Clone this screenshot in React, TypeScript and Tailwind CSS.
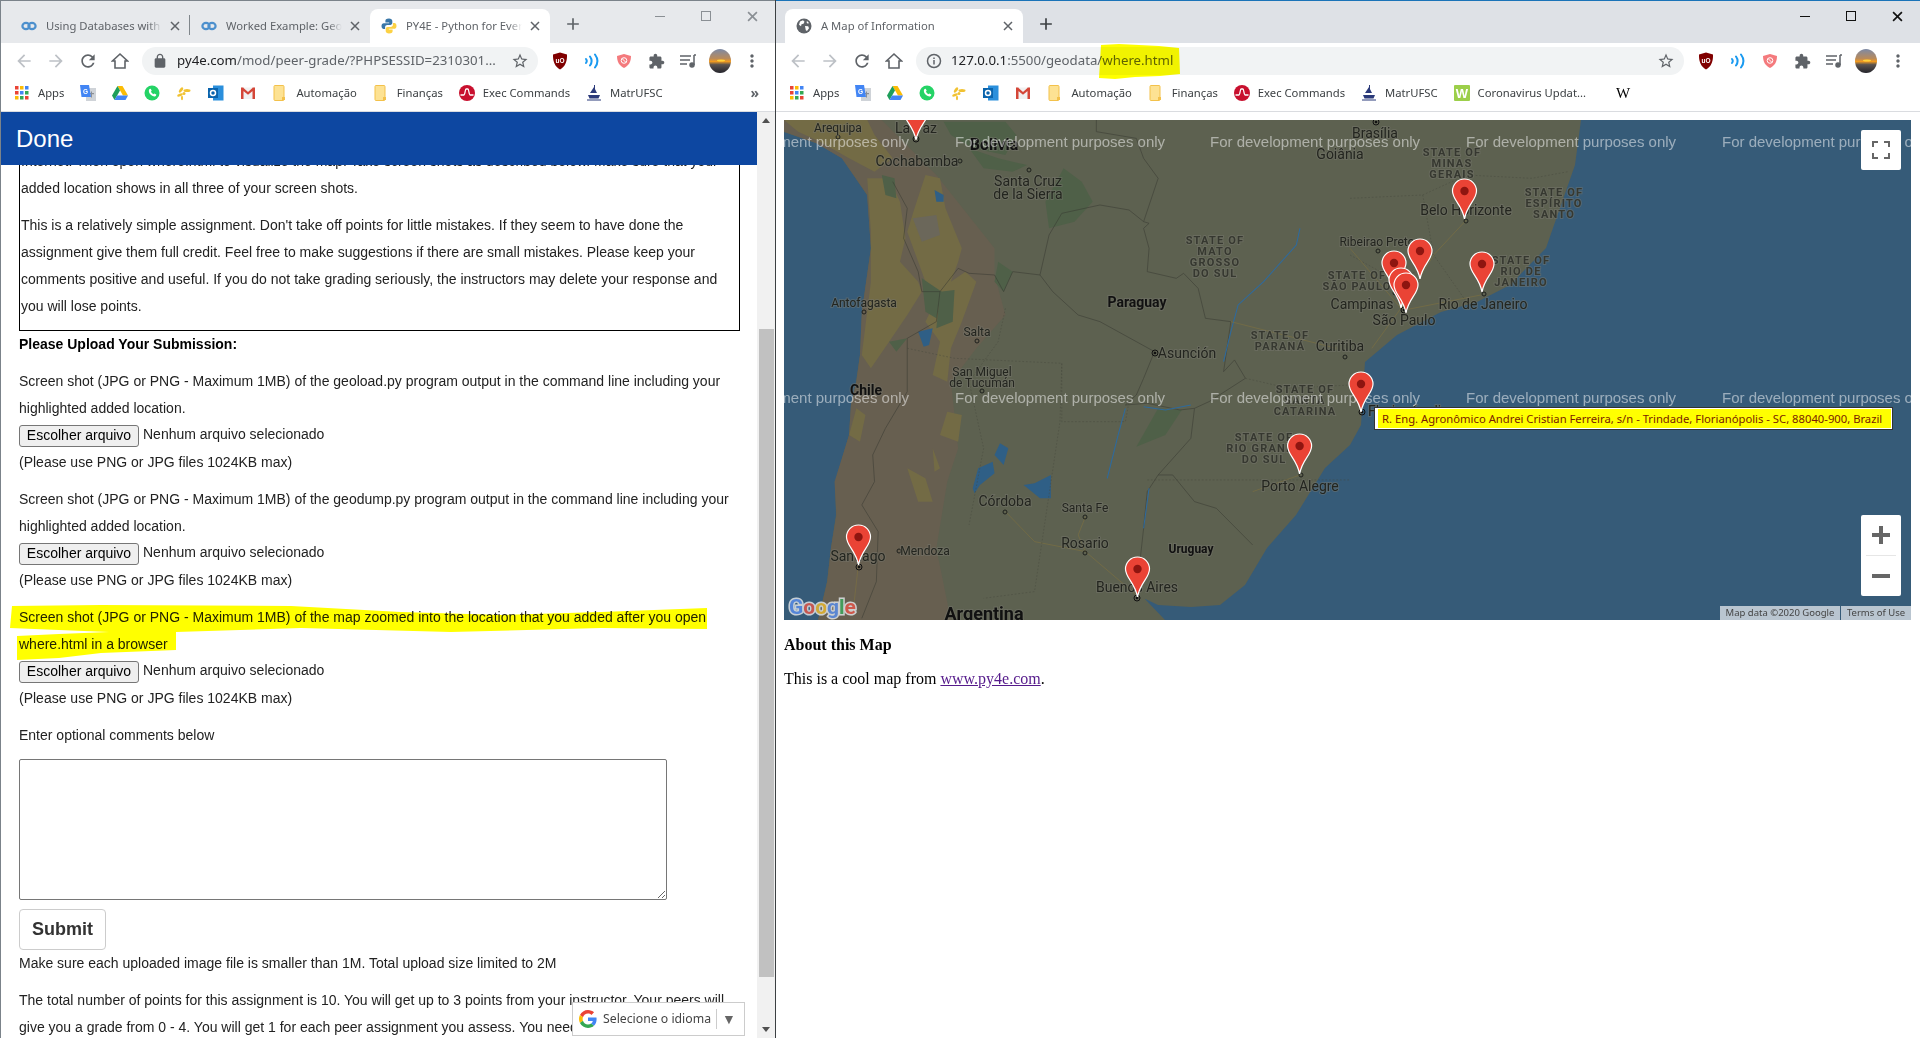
import React from "react";

const uiFont = "font-['Noto_Sans','Open_Sans',sans-serif]";
const arial = "font-['Liberation_Sans',Arial,sans-serif]";

const Mat = ({ d, size = 18, color = "#5f6368" }: { d: string; size?: number; color?: string }) => (
  <svg width={size} height={size} viewBox="0 0 24 24" fill={color}>
    <path d={d} />
  </svg>
);

const ICONS = {
  back: "M20 11H7.83l5.59-5.59L12 4l-8 8 8 8 1.41-1.41L7.83 13H20v-2z",
  forward: "M12 4l-1.41 1.41L16.17 11H4v2h12.17l-5.58 5.59L12 20l8-8z",
  reload:
    "M17.65 6.35C16.2 4.9 14.21 4 12 4c-4.42 0-7.99 3.58-7.99 8s3.57 8 7.99 8c3.73 0 6.84-2.55 7.73-6h-2.08c-.82 2.33-3.04 4-5.65 4-3.31 0-6-2.69-6-6s2.69-6 6-6c1.66 0 3.14.69 4.22 1.78L13 11h7V4l-2.35 2.35z",
  star: "M22 9.24l-7.19-.62L12 2 9.19 8.63 2 9.24l5.46 4.73L5.82 21 12 17.27 18.18 21l-1.63-7.03L22 9.24zM12 15.4l-3.76 2.27 1-4.28-3.32-2.88 4.38-.38L12 6.1l1.71 4.04 4.38.38-3.32 2.88 1 4.28L12 15.4z",
  puzzle:
    "M20.5 11H19V7c0-1.1-.9-2-2-2h-4V3.5C13 2.12 11.88 1 10.5 1S8 2.12 8 3.5V5H4c-1.1 0-1.99.9-1.99 2v3.8H3.5c1.49 0 2.7 1.21 2.7 2.7s-1.21 2.7-2.7 2.7H2V20c0 1.1.9 2 2 2h3.8v-1.5c0-1.49 1.21-2.7 2.7-2.7 1.49 0 2.7 1.21 2.7 2.7V22H17c1.1 0 2-.9 2-2v-4h1.5c1.38 0 2.5-1.12 2.5-2.5S21.88 11 20.5 11z",
  dots: "M12 8c1.1 0 2-.9 2-2s-.9-2-2-2-2 .9-2 2 .9 2 2 2zm0 2c-1.1 0-2 .9-2 2s.9 2 2 2 2-.9 2-2-.9-2-2-2zm0 6c-1.1 0-2 .9-2 2s.9 2 2 2 2-.9 2-2-.9-2-2-2z",
  lock: "M18 8h-1V6c0-2.76-2.24-5-5-5S7 3.24 7 6v2H6c-1.1 0-2 .9-2 2v10c0 1.1.9 2 2 2h12c1.1 0 2-.9 2-2V10c0-1.1-.9-2-2-2zM9 6c0-1.66 1.34-3 3-3s3 1.34 3 3v2H9V6z",
};

const HomeIcon = () => (
  <svg width="18" height="18" viewBox="0 0 18 18" fill="none" stroke="#5f6368" strokeWidth="1.6">
    <path d="M9 2 1.5 9H4v7h10V9h2.5L9 2z" strokeLinejoin="miter" />
  </svg>
);

const CloseX = ({ color = "#5f6368", size = 10 }: { color?: string; size?: number }) => (
  <svg width={size} height={size} viewBox="0 0 10 10" stroke={color} strokeWidth="1.5">
    <path d="M1 1l8 8M9 1l-8 8" />
  </svg>
);

const CourseraIcon = () => (
  <svg width="16" height="16" viewBox="0 0 16 16" fill="none" stroke="#4d90cd" strokeWidth="2.2">
    <ellipse cx="5" cy="8" rx="3.6" ry="3.2" />
    <ellipse cx="11" cy="8" rx="3.6" ry="3.2" />
  </svg>
);

const PythonIcon = () => (
  <svg width="16" height="16" viewBox="0 0 16 16">
    <path
      fill="#3a77a8"
      d="M8 .5C5 .5 4.4 1.7 4.4 3v1.6h3.8v.6H2.9C1.4 5.2.5 6.4.5 8.1c0 1.6.8 2.9 2.2 2.9h1.4V9.2c0-1.3 1-2.2 2.2-2.2h3.1c1 0 1.9-.8 1.9-1.9V3C11.3 1.4 10 .5 8 .5z"
    />
    <path
      fill="#fcd144"
      d="M8 15.5c3 0 3.6-1.2 3.6-2.5v-1.6H7.8v-.6h5.3c1.5 0 2.4-1.2 2.4-2.9 0-1.6-.8-2.9-2.2-2.9h-1.4v1.8c0 1.3-1 2.2-2.2 2.2H6.6c-1 0-1.9.8-1.9 1.9V13c0 1.6 1.3 2.5 3.3 2.5z"
    />
  </svg>
);

const GlobeIcon = () => (
  <svg width="16" height="16" viewBox="0 0 16 16">
    <circle cx="8" cy="8" r="7.5" fill="#5f6368" />
    <path fill="#fff" d="M4 3.5l3-1.2 1.5 1.5-1 2-2 .4-.5 2-2-1.5zM9 8l3.2.3.8 2-2 2.7-1.2-.7zM11 3l2 2-1.2.8-1.3-1.5z" />
  </svg>
);

const UblockIcon = () => (
  <svg width="16" height="18" viewBox="0 0 16 18">
    <path fill="#800000" d="M8 .5 15 2.5c.2 6.5-1.5 12-7 15C2.5 14.5.8 9 1 2.5z" />
    <text x="8" y="10.5" fontSize="6.5" fontWeight="700" fill="#fff" textAnchor="middle" fontFamily="Liberation Sans">
      uO
    </text>
  </svg>
);

const SignalIcon = () => (
  <svg width="16" height="16" viewBox="0 0 16 16" fill="none" stroke="#1a9af0" strokeWidth="2" strokeLinecap="round">
    <path d="M2 6c1 1.3 1 2.7 0 4M6 3.5c2 2.8 2 6.2 0 9M11 1.5c3 4 3 9 0 13" />
  </svg>
);

const PinkShield = () => (
  <svg width="16" height="16" viewBox="0 0 16 16">
    <path fill="#f47a7d" d="M8 1 15 3c0 5.5-2 9.5-7 12C3 12.5 1 8.5 1 3z" />
    <circle cx="8" cy="7.5" r="2.8" fill="none" stroke="#fff" strokeWidth="1" />
    <path d="M6 5.5l4 4" stroke="#fff" strokeWidth="1" />
  </svg>
);

const QueueIcon = () => (
  <svg width="18" height="16" viewBox="0 0 18 16" fill="none" stroke="#5f6368" strokeWidth="1.5">
    <path d="M1 3h11M1 7h10M1 11h7M15 2v10" />
    <circle cx="13" cy="12" r="2" fill="#5f6368" />
    <path d="M15 2h2" />
  </svg>
);

const Avatar = ({ id }: { id: string }) => (
  <svg width="22" height="24" viewBox="0 0 22 24">
    <defs>
      <linearGradient id={id} x1="0" y1="0" x2="0" y2="1">
        <stop offset="0" stopColor="#7d8aa6" />
        <stop offset="0.4" stopColor="#b98a5a" />
        <stop offset="0.52" stopColor="#f29a1f" />
        <stop offset="0.65" stopColor="#5c5450" />
        <stop offset="1" stopColor="#24242c" />
      </linearGradient>
    </defs>
    <ellipse cx="11" cy="12" rx="11" ry="12" fill={`url(#${id})`} />
    <ellipse cx="12" cy="11.5" rx="4" ry="1" fill="#ffd23c" />
  </svg>
);

const AppsIcon = () => {
  const colors = ["#ea4335", "#fbbc05", "#4285f4", "#ea4335", "#4285f4", "#34a853", "#fbbc05", "#34a853", "#ea4335"];
  return (
    <svg width="16" height="16" viewBox="0 0 16 16">
      {colors.map((c, i) => (
        <rect key={i} x={1 + (i % 3) * 5} y={1 + Math.floor(i / 3) * 5} width="3.5" height="3.5" fill={c} />
      ))}
    </svg>
  );
};

const TranslateIcon = () => (
  <svg width="16" height="16" viewBox="0 0 16 16">
    <rect x="6" y="3" width="10" height="13" fill="#cfd3d8" />
    <path fill="#8a8f96" d="M9 8h5v1.2h-5zM11 6.5h1v6h-1z" />
    <path fill="#4285f4" d="M0 0h9l2 12H1.5z" />
    <text x="5.5" y="8.5" fontSize="6.5" fontWeight="700" fill="#fff" textAnchor="middle" fontFamily="Liberation Sans">
      G
    </text>
  </svg>
);

const DriveIcon = () => (
  <svg width="16" height="16" viewBox="0 0 16 16">
    <path fill="#fbbc05" d="M5.5 1h5l5.5 9.5h-5z" />
    <path fill="#1e9e5a" d="M5.5 1 0 10.5 2.5 15 8 5.5z" />
    <path fill="#4285f4" d="M5 10.5h11L13.5 15h-11z" />
  </svg>
);

const WhatsappIcon = () => (
  <svg width="16" height="16" viewBox="0 0 16 16">
    <circle cx="8" cy="8" r="7.5" fill="#25d366" />
    <path
      fill="#fff"
      d="M5.5 4l1.2-.2 1 2-.8 1c.5 1 1.3 1.8 2.4 2.4l1-.8 2 1-.3 1.3c-.3.6-1 .9-1.7.8-3-.5-5.3-2.7-5.5-5.5 0-.8.3-1.5.7-2z"
    />
  </svg>
);

const BurstIcon = () => (
  <svg width="16" height="16" viewBox="0 0 16 16" fill="#f1c232">
    <ellipse cx="5" cy="5" rx="1.5" ry="3" transform="rotate(35 5 5)" />
    <ellipse cx="11" cy="5.5" rx="3.5" ry="1.5" />
    <ellipse cx="8" cy="8.5" rx="1.5" ry="1.5" />
    <ellipse cx="4" cy="10" rx="3" ry="1.3" transform="rotate(-20 4 10)" />
    <ellipse cx="6" cy="13" rx="1" ry="2.2" />
  </svg>
);

const OutlookIcon = () => (
  <svg width="16" height="16" viewBox="0 0 16 16">
    <rect x="5" y="0.5" width="10.5" height="15" fill="#2a8fdc" />
    <rect x="0" y="3" width="10" height="10" fill="#0a64ad" />
    <circle cx="5" cy="8" r="2.5" fill="none" stroke="#fff" strokeWidth="1.5" />
  </svg>
);

const GmailIcon = () => (
  <svg width="16" height="16" viewBox="0 0 16 16">
    <rect x="1" y="2.5" width="14" height="11.5" fill="#f1f1f1" />
    <path fill="#d44638" d="M1 2.5h2.5V14H1zM12.5 2.5H15V14h-2.5zM1 2.5h2L8 7l5-4.5h2V4L8 9.8 1 4z" />
  </svg>
);

const FolderIcon = () => (
  <svg width="16" height="16" viewBox="0 0 16 16">
    <rect x="2" y="0.5" width="10" height="15" rx="1" fill="#fde293" stroke="#f3c14b" />
    <rect x="10" y="12" width="3" height="3" fill="#f3c14b" />
  </svg>
);

const ExecIcon = () => (
  <svg width="16" height="16" viewBox="0 0 16 16">
    <circle cx="8" cy="8" r="8" fill="#c8102e" />
    <path d="M1.5 10H5c1 0 1.2-6 2-6h2c.8 0 1 6 2 6h3.5" fill="none" stroke="#fff" strokeWidth="1.3" />
  </svg>
);

const ShipIcon = () => (
  <svg width="16" height="16" viewBox="0 0 16 16" fill="#2b3a7a">
    <path d="M2 10h12l-1.5 3.5h-9zM4 8l4-6 3 6zM1 14.500h14v1H1z" />
    <path d="M8 0h1v8H8z" />
  </svg>
);

const WorldometerIcon = () => (
  <svg width="16" height="16" viewBox="0 0 16 16">
    <rect width="16" height="16" rx="1" fill="#9ccf4a" />
    <text x="8" y="13" fontSize="13" fontWeight="700" fill="#fff" textAnchor="middle" fontFamily="Liberation Sans">
      W
    </text>
  </svg>
);

const GoogleG = ({ size = 18 }: { size?: number }) => (
  <svg width={size} height={size} viewBox="0 0 48 48">
    <path fill="#EA4335" d="M24 9.5c3.5 0 6.7 1.2 9.2 3.6l6.9-6.9C35.9 2.4 30.5 0 24 0 14.6 0 6.5 5.4 2.6 13.2l8 6.2C12.4 13.7 17.7 9.5 24 9.5z" />
    <path fill="#4285F4" d="M46.9 24.5c0-1.600-.1-3.100-.4-4.500H24v9h12.900c-.6 3-2.200 5.500-4.700 7.200l7.700 6c4.500-4.200 7-10.300 7-17.700z" />
    <path fill="#FBBC05" d="M10.5 28.6c-.5-1.400-.8-3-.8-4.600s.3-3.200.8-4.600l-8-6.200C.9 16.500 0 20.100 0 24s.9 7.500 2.600 10.800l7.900-6.200z" />
    <path fill="#34A853" d="M24 48c6.500 0 11.900-2.100 15.900-5.800l-7.700-6c-2.200 1.500-4.900 2.300-8.200 2.300-6.300 0-11.600-4.200-13.500-9.900l-8 6.200C6.500 42.600 14.600 48 24 48z" />
  </svg>
);

const Tab = ({
  icon,
  title,
  active = false,
  divider = false,
  wide = false,
}: {
  icon: React.ReactNode;
  title: string;
  active?: boolean;
  divider?: boolean;
  wide?: boolean;
}) => (
  <div
    className={`relative flex h-[34px] shrink-0 items-center pl-[11px] pr-[7px] ${wide ? "w-[238px]" : "w-[180px]"} ${active ? "rounded-t-[8px] bg-white" : ""}`}
  >
    {icon}
    <div className="ml-[9px] min-w-0 flex-1 overflow-hidden whitespace-nowrap text-[11.25px] text-[#5f6368] [mask-image:linear-gradient(to_right,black_88%,transparent)]">
      {title}
    </div>
    <div className="ml-[5px] flex w-4 shrink-0 justify-center">
      <CloseX />
    </div>
    {divider && <div className="absolute right-0 top-[6px] h-5 w-px bg-[#80868b]" />}
  </div>
);

const WindowControls = ({ color }: { color: string }) => (
  <div className="ml-auto flex self-start">
    <div className="flex h-[30px] w-[46px] items-center justify-center">
      <div className="h-px w-[10px]" style={{ background: color }} />
    </div>
    <div className="flex h-[30px] w-[46px] items-center justify-center">
      <div className="h-[10px] w-[10px] border" style={{ borderColor: color }} />
    </div>
    <div className="flex h-[30px] w-[46px] items-center justify-center">
      <CloseX color={color} size={11} />
    </div>
  </div>
);

const ToolButton = ({ children }: { children: React.ReactNode }) => (
  <div className="flex h-8 w-8 shrink-0 items-center justify-center">{children}</div>
);

const Toolbar = ({
  lead,
  address,
  avatarId,
  highlight = false,
  padding,
}: {
  lead: React.ReactNode;
  address: React.ReactNode;
  avatarId: string;
  highlight?: boolean;
  padding: string;
}) => (
  <div className={`flex h-9 shrink-0 items-center bg-white ${padding}`}>
    <ToolButton>
      <Mat d={ICONS.back} size={20} color="#bdc1c6" />
    </ToolButton>
    <ToolButton>
      <Mat d={ICONS.forward} size={20} color="#bdc1c6" />
    </ToolButton>
    <ToolButton>
      <Mat d={ICONS.reload} size={20} />
    </ToolButton>
    <ToolButton>
      <HomeIcon />
    </ToolButton>
    <div className="relative ml-[6px] flex h-7 min-w-0 flex-1 items-center rounded-full bg-[#f1f3f4] pl-[10px] pr-[9px]">
      <div className="flex w-4 shrink-0 justify-center">{lead}</div>
      <div className="ml-[9px] min-w-0 flex-1 whitespace-nowrap text-[13.25px] text-[#5f6368]">{address}</div>
      <Mat d={ICONS.star} size={18} />
      {highlight && (
        <svg className="absolute left-[183px] top-[-3px] mix-blend-multiply" width="82" height="36" viewBox="0 0 82 36">
          <path fill="#ffff00" d="M2 1 20 0l40 2 20 2 1 26-20 2-25 1-20 2-16-1z" />
        </svg>
      )}
    </div>
    <div className="ml-[6px] flex shrink-0">
      <ToolButton>
        <UblockIcon />
      </ToolButton>
      <ToolButton>
        <SignalIcon />
      </ToolButton>
      <ToolButton>
        <PinkShield />
      </ToolButton>
      <ToolButton>
        <Mat d={ICONS.puzzle} size={17} />
      </ToolButton>
      <ToolButton>
        <QueueIcon />
      </ToolButton>
      <ToolButton>
        <Avatar id={avatarId} />
      </ToolButton>
      <ToolButton>
        <Mat d={ICONS.dots} size={20} />
      </ToolButton>
    </div>
  </div>
);

const Bookmark = ({ icon, label }: { icon: React.ReactNode; label?: string }) => (
  <div className="flex shrink-0 items-center gap-[8px]">
    {icon}
    {label && <span className="text-[11.25px] text-[#3c4043]">{label}</span>}
  </div>
);

const CommonBookmarks = () => (
  <>
    <Bookmark icon={<AppsIcon />} label="Apps" />
    <Bookmark icon={<TranslateIcon />} />
    <Bookmark icon={<DriveIcon />} />
    <Bookmark icon={<WhatsappIcon />} />
    <Bookmark icon={<BurstIcon />} />
    <Bookmark icon={<OutlookIcon />} />
    <Bookmark icon={<GmailIcon />} />
    <Bookmark icon={<FolderIcon />} label="Automação" />
    <Bookmark icon={<FolderIcon />} label="Finanças" />
    <Bookmark icon={<ExecIcon />} label="Exec Commands" />
    <Bookmark icon={<ShipIcon />} label="MatrUFSC" />
  </>
);

/* ---- left page ---- */

const Line = ({ children, className = "" }: { children: React.ReactNode; className?: string }) => (
  <div className={`h-[27px] whitespace-nowrap leading-[27px] ${className}`}>{children}</div>
);

const UploadBlock = ({ first, second }: { first: string; second: string }) => (
  <div className="mb-[10px]">
    <Line>{first}</Line>
    <Line>{second}</Line>
    <div className="flex h-[27px] items-center">
      <button className="flex h-[22px] w-[120px] items-center justify-center rounded-[3px] border border-[#767676] bg-[#efefef] text-[14px] text-black">
        Escolher arquivo
      </button>
      <span className="ml-1 -translate-y-px">Nenhum arquivo selecionado</span>
    </div>
    <Line>(Please use PNG or JPG files 1024KB max)</Line>
  </div>
);

const LeftPage = () => (
  <div className={`relative flex-1 overflow-hidden bg-white ${arial}`}>
    <div className="absolute left-0 right-[18px] top-0 z-10 flex h-[53px] items-center bg-[#0d47a1] pl-[15px] text-[24px] text-white">
      Done
    </div>

    <div className="relative h-full w-[757px] pl-[18px] pr-[18px] pt-[36px] text-[14px] text-[#222]">
      <div className="mb-0 border-x border-b border-black pl-px">
        <Line>Internet. Then open where.html to visualize the map. Take screen shots as described below. Make sure that your</Line>
        <Line className="mb-[10px]">added location shows in all three of your screen shots.</Line>
        <Line>This is a relatively simple assignment. Don't take off points for little mistakes. If they seem to have done the</Line>
        <Line>assignment give them full credit. Feel free to make suggestions if there are small mistakes. Please keep your</Line>
        <Line>comments positive and useful. If you do not take grading seriously, the instructors may delete your response and</Line>
        <Line className="mb-[10px]">you will lose points.</Line>
      </div>
      <Line className="mb-[10px] font-bold text-black">Please Upload Your Submission:</Line>
      <UploadBlock
        first="Screen shot (JPG or PNG - Maximum 1MB) of the geoload.py program output in the command line including your"
        second="highlighted added location."
      />
      <UploadBlock
        first="Screen shot (JPG or PNG - Maximum 1MB) of the geodump.py program output in the command line including your"
        second="highlighted added location."
      />
      <UploadBlock
        first="Screen shot (JPG or PNG - Maximum 1MB) of the map zoomed into the location that you added after you open"
        second="where.html in a browser"
      />
      <Line className="mb-[10px]">Enter optional comments below</Line>
      <textarea
        readOnly
        className="mb-[9px] block h-[141px] w-[648px] rounded-[2px] border border-[#767676] bg-white"
      />
      <button className="flex h-[41px] w-[87px] items-center justify-center rounded-[4px] border border-[#cccccc] bg-white text-[18px] font-bold text-[#333]">
        Submit
      </button>
      <Line className="mb-[10px]">Make sure each uploaded image file is smaller than 1M. Total upload size limited to 2M</Line>
      <Line>The total number of points for this assignment is 10. You will get up to 3 points from your instructor. Your peers will</Line>
      <Line>give you a grade from 0 - 4. You will get 1 for each peer assignment you assess. You need to grade a minimum of</Line>

      {/* marker pen over the third upload block */}
      <svg className="pointer-events-none absolute left-0 top-[488px] mix-blend-multiply" width="720" height="62" viewBox="0 0 720 62">
        <path
          fill="#ffff00"
          d="M11 6 100 5l190 1 110 6 100 3 100-3 106-4v21l-106-1-150 4-150-4-125 4v18l-75 3-42 5-42 2V36l42-2 50-2-50-2-49-2z"
        />
      </svg>
    </div>

    {/* scrollbar */}
    <div className="absolute bottom-0 right-0 top-0 flex w-[18px] flex-col items-center bg-[#f1f1f1]">
      <div className="mt-[6px] h-0 w-0 border-x-[4px] border-b-[5px] border-x-transparent border-b-[#505050]" />
      <div className="mt-[206px] h-[648px] w-[15px] bg-[#c1c1c1]" />
      <div className="mt-auto mb-[6px] h-0 w-0 border-x-[4px] border-t-[5px] border-x-transparent border-t-[#505050]" />
    </div>

    {/* language widget */}
    <div className="absolute left-[571px] top-[890px] z-10 flex h-[34px] w-[173px] items-center border border-[#cccccc] bg-white pl-[6px] text-[12px] text-[#444]">
      <GoogleG />
      <span className={`ml-[6px] text-[12.25px] ${uiFont}`}>Selecione o idioma</span>
      <div className="ml-[5px] h-5 w-px bg-[#cccccc]" />
      <span className="ml-[5px] text-[14px] text-[#666]">▼</span>
    </div>
  </div>
);

/* ---- map ---- */

type Label = [string, number, number, number?, number?];

const cityLabels: Label[] = [
  ["Arequipa", 54, 8, 12],
  ["La Paz", 132, 8, 14],
  ["Bolivia", 210, 24, 16, 700],
  ["Cochabamba", 133, 41, 14],
  ["Santa Cruz", 244, 61, 14],
  ["de la Sierra", 244, 74, 14],
  ["Antofagasta", 80, 183, 12],
  ["Salta", 193, 212, 12],
  ["San Miguel", 198, 252, 12],
  ["de Tucumán", 198, 263, 12],
  ["Chile", 82, 270, 14, 700],
  ["Paraguay", 353, 182, 14, 700],
  ["Asunción", 403, 233, 14],
  ["Córdoba", 221, 381, 14],
  ["Santa Fe", 301, 388, 12],
  ["Rosario", 301, 423, 14],
  ["Mendoza", 141, 431, 12],
  ["Santiago", 74, 436, 14],
  ["Buenos Aires", 353, 467, 14],
  ["Uruguay", 407, 429, 12, 700],
  ["Argentina", 200, 494, 18, 700],
  ["Porto Alegre", 516, 366, 14],
  ["Curitiba", 556, 226, 14],
  ["Goiânia", 556, 34, 14],
  ["Brasília", 591, 13, 14],
  ["Belo Horizonte", 682, 90, 14],
  ["Ribeirao Preto", 593, 122, 12],
  ["Campinas", 578, 184, 14],
  ["São Paulo", 620, 200, 14],
  ["Rio de Janeiro", 699, 184, 14],
];

const stateLabels: [string[], number, number][] = [
  [["STATE OF", "MATO", "GROSSO", "DO SUL"], 431, 120],
  [["STATE OF", "PARANÁ"], 496, 215],
  [["STATE OF", "SANTA", "CATARINA"], 521, 269],
  [["STATE OF", "RIO GRANDE", "DO SUL"], 480, 317],
  [["STATE OF", "SÃO PAULO"], 573, 155],
  [["STATE OF", "RIO DE", "JANEIRO"], 737, 140],
  [["STATE OF", "ESPÍRITO", "SANTO"], 770, 72],
  [["STATE OF", "MINAS", "GERAIS"], 668, 32],
];

const cityDots: [number, number][] = [
  [176, 41], [245, 50], [54, 17], [80, 192], [193, 221], [198, 271], [221, 392], [301, 397],
  [301, 433], [115, 431], [517, 355], [561, 237], [594, 131], [682, 101], [700, 174], [611, 173],
];

const bullDots: [number, number][] = [
  [132, 19], [371, 233], [75, 447], [353, 478], [620, 190], [592, 2], [578, 292],
];

const pins: [number, number][] = [
  [132, 20], [74.5, 445], [353.5, 477], [515.6, 354], [680.5, 99], [636, 159], [698, 172], [610, 171],
  [617, 188], [622, 193], [577, 292],
];

const Pin = ({ x, y }: { x: number; y: number }) => (
  <g transform={`translate(${x - 13} ${y - 41})`}>
    <path
      d="M13 1C6 1 1 6.5 1 13c0 9 9.5 13.5 12 28C15.5 26.5 25 22 25 13 25 6.5 20 1 13 1z"
      fill="#ea4335"
      stroke="#fff"
      strokeWidth="1.2"
    />
    <circle cx="13" cy="13" r="4.2" fill="#8e1510" />
  </g>
);

const MapDrawing = () => (
  <svg className="absolute inset-0" width="1127" height="500" viewBox="0 0 1127 500" fontFamily="Roboto, sans-serif">
    <rect width="1127" height="500" fill="#365b78" />
    <path
      fill="#5d6150"
      d="M0 12 32 23 58 38 83 75 87 128 78 192 76 235 72 262 67 285 65 315 51 362 52 395 47 428 43 462 34 500H381L360 478 353 475 374 485 407 487 436 485 461 465 483 428 512 395 541 348 566 325 577 305 581 242 613 215 657 192 693 182 726 165 762 128 791 45 797 0H0z"
    />
    {/* terrain, in the 2.75x/3x coordinates used while tracing */}
    <g transform="translate(-4 -5) scale(.3636 .3333)">
      <path
        fill="#675f50"
        d="M11 50 100 85 170 130 240 240 250 400 225 590 220 720 210 800 195 870 190 960 150 1100 155 1200 140 1300 130 1400 105 1515H470L430 1300 460 1100 490 1000 470 800 540 700 620 600 590 480 590 400 430 180 280 15H11z"
      />
      <g fill="#736b45">
        <path d="M11 15 50 50 110 80 190 130 260 170 310 130 260 60 240 15z" />
        <path d="M240 190 300 190 330 260 345 370 330 440 380 500 390 530 350 600 300 680 250 760 225 720 250 500 250 350z" />
        <path d="M400 180 440 190 455 280 500 400 490 440 470 500 510 470 540 500 500 620 470 700 460 800 420 780 440 680 400 620 440 530 400 500 350 350 370 280z" />
        <path d="M460 890 500 900 490 980 440 960zM350 1060 400 1090 420 1160 380 1160zM210 880 235 900 220 980 190 960zM420 1000 440 1060 425 1070z" />
      </g>
      <path fill="#6b675a" d="M365 310 430 300 440 360 390 380z" />
      <g fill="#4f6048">
        <path d="M390 490 445 530 430 610 400 590z" />
        <path d="M440 530 480 525 475 620 430 640z" />
        <path d="M280 180 315 190 320 250 290 240zM600 440 640 470 615 530 590 500zM300 680 350 670 320 710z" />
        <path d="M1040 880 1105 885 1060 960 980 995z" />
        <path d="M780 160 830 200 860 260 810 320 740 340 730 260z" />
        <path d="M520 100 600 130 680 150 640 170 560 160zM450 20 620 20 650 60 620 120 530 100 470 60z" />
      </g>
      <g fill="#2f5f86">
        <path d="M590 1020 605 985 628 1000 615 1050z" />
        <path d="M530 1120 545 1060 585 1040 590 1075 550 1110 535 1135z" />
        <path d="M670 1110 700 1105 745 1080 745 1150 715 1150z" />
        <path d="M425 225 450 240 450 260 430 260zM380 650 420 640 410 690 395 695z" />
      </g>
      <g fill="none" stroke="#35372f" strokeWidth="2" opacity=".7">
        <path d="M870 15V50L980 70 1000 130 1040 190 1000 320 1015 325 1000 340 1015 400 1010 470 1090 490 1110 475 1150 520 1170 610 1240 620 1220 770 1250 735 1280 790 1180 860 1140 880 1100 885 1010 865 950 870" />
        <path d="M1000 320 960 285 880 270 775 295 740 360 715 480 750 530 820 600 880 620 1030 710 1000 790 980 840 950 870" />
        <path d="M715 480 640 470 615 530 590 480 520 475 490 460 440 530 390 530 380 470 340 370 350 280 310 200" />
        <path d="M440 530 430 620 350 670V830L290 940 255 1020 260 1100 225 1170 270 1250 265 1400 225 1510" />
        <path d="M1140 880 1130 970 1040 1080 1010 1130 1000 1240 990 1340M1040 1080H1080L1140 1160 1200 1180 1300 1290" />
      </g>
      <g fill="none" stroke="#2f6a9c" strokeWidth="3">
        <path d="M1430 340 1420 390 1330 500 1260 570 1240 650 1220 740M950 880 930 960 900 1090M1015 1120 1000 1240" />
        <path d="M1000 875 1060 885 1130 870" />
      </g>
      <g fill="none" stroke="#7d7040" strokeWidth="1.8">
        <path d="M620 1190 700 1280 840 1310 980 1440M840 1205 820 1260 840 1310M215 1355 200 1500M1430 1080 1300 1130M1240 620 1530 700" />
      </g>
      <g fill="none" stroke="#45473c" strokeWidth="1.3" strokeDasharray="5 5">
        <path d="M350 700 480 730 775 745V920H950L960 860M775 745 770 920 700 1430 560 1450M620 580 600 680 520 800 560 1000 520 1230M1280 790 1400 820 1568 810M1010 1095H1568" />
      </g>
    </g>
    <g transform="translate(566 -5) scale(.3636 .3333)" fill="none" stroke="#45473c" strokeWidth="1.3" strokeDasharray="5 5">
      <path d="M0 250 200 240 320 180 500 190 600 170M200 240 230 420 320 560M0 420 100 480 200 470" />
    </g>
    <g transform="translate(566 -5) scale(.3636 .3333)" fill="none" stroke="#7d7040" strokeWidth="1.8">
      <path d="M320 315 230 420 140 580 60 700M360 540 150 585M0 400 140 580" />
    </g>

    {/* city dots */}
    {cityDots.map(([x, y], i) => (
      <circle key={i} cx={x} cy={y} r="2" fill="none" stroke="#1e201c" strokeWidth="1" />
    ))}
    {bullDots.map(([x, y], i) => (
      <g key={i}>
        <circle cx={x} cy={y} r="3" fill="none" stroke="#111" strokeWidth="1" />
        <circle cx={x} cy={y} r="1.3" fill="#111" />
      </g>
    ))}

    {/* labels */}
    <g stroke="rgba(120,120,110,.45)" strokeWidth="2" paintOrder="stroke">
      {cityLabels.map(([text, x, y, size = 14, weight = 400]) => (
        <text
          key={text}
          x={x}
          y={y + size * 0.36}
          fontSize={size}
          fontWeight={weight}
          textAnchor="middle"
          fill={weight === 700 ? "#111" : "#23251f"}
        >
          {text}
        </text>
      ))}
      <text x="584" y="296" fontSize="14" fill="#23251f">
        Florianópolis
      </text>
      {stateLabels.map(([lines, x, y]) =>
        lines.map((line, i) => (
          <text
            key={`${x}-${line}`}
            x={x}
            y={y + i * 11 + 4}
            fontSize="11"
            fontWeight="700"
            letterSpacing="1.2"
            textAnchor="middle"
            fill="#363830"
          >
            {line}
          </text>
        ))
      )}
    </g>

    {/* watermark */}
    <g fontFamily="Liberation Sans, Arial, sans-serif" fontSize="15" fill="#ffffff" fillOpacity=".5">
      {[27, 283].map((y) =>
        [-85, 171, 426, 682, 938].map((x) => (
          <text key={`${x}-${y}`} x={x} y={y}>
            For development purposes only
          </text>
        ))
      )}
    </g>

    {pins.map(([x, y], i) => (
      <Pin key={i} x={x} y={y} />
    ))}

    <text x="5" y="494" fontSize="21" fontWeight="700" stroke="#dfe3e6" strokeWidth="3" paintOrder="stroke" opacity=".85">
      <tspan fill="#5a8de8">G</tspan>
      <tspan fill="#e0574b">o</tspan>
      <tspan fill="#e8b730">o</tspan>
      <tspan fill="#5a8de8">g</tspan>
      <tspan fill="#3ea65c">l</tspan>
      <tspan fill="#e0574b">e</tspan>
    </text>
  </svg>
);

const GoogleMap = () => (
  <div className="relative h-[500px] w-[1127px] overflow-hidden">
    <MapDrawing />

    {/* fullscreen */}
    <div className="absolute right-[10px] top-[10px] flex h-10 w-10 items-center justify-center rounded-[2px] bg-white">
      <svg width="18" height="18" viewBox="0 0 18 18" fill="none" stroke="#666" strokeWidth="2">
        <path d="M1 6V1h5M12 1h5v5M17 12v5h-5M6 17H1v-5" />
      </svg>
    </div>

    {/* info window */}
    <div className="absolute left-[590px] top-[287px] flex h-[23px] w-[519px] items-center border border-[#333] bg-white p-[1px] pl-[3px]">
      <div className={`flex h-full w-full items-center whitespace-nowrap bg-[#ffff00] pl-[4px] text-[11.25px] text-[#7a1c00] ${uiFont}`}>
        R. Eng. Agronômico Andrei Cristian Ferreira, s/n - Trindade, Florianópolis - SC, 88040-900, Brazil
      </div>
    </div>

    {/* zoom */}
    <div className="absolute bottom-[24px] right-[10px] flex h-[81px] w-10 flex-col items-center rounded-[2px] bg-white">
      <div className="flex h-10 items-center justify-center">
        <svg width="18" height="18" viewBox="0 0 18 18" fill="#666">
          <path d="M7 0h4v7h7v4h-7v7H7v-7H0V7h7z" />
        </svg>
      </div>
      <div className="h-px w-[30px] bg-[#e6e6e6]" />
      <div className="flex h-10 items-center justify-center">
        <div className="h-[4px] w-[18px] bg-[#666]" />
      </div>
    </div>

    {/* attribution */}
    <div className={`absolute bottom-0 right-0 flex h-[14px] items-center gap-px text-[9.5px] text-[#444] ${uiFont}`}>
      <div className="flex h-full w-[120px] items-center justify-center bg-[#b9c5d0]">Map data ©2020 Google</div>
      <div className="flex h-full w-[70px] items-center justify-center bg-[#b9c5d0]">Terms of Use</div>
    </div>
  </div>
);

export default function App() {
  return (
    <div className={`flex h-[1038px] w-[1920px] overflow-hidden bg-white ${uiFont}`}>
      {/* left browser window */}
      <div className="flex h-full w-[775px] shrink-0 flex-col border-l border-t border-[#7b838a]">
        <div className="flex h-[42px] shrink-0 items-end bg-[#e7e9ec] pl-[9px]">
          <Tab icon={<CourseraIcon />} title="Using Databases with Python" divider />
          <Tab icon={<CourseraIcon />} title="Worked Example: Geocoding" />
          <Tab icon={<PythonIcon />} title="PY4E - Python for Everybody" active />
          <div className="mb-[9px] ml-[13px]">
            <Mat d="M19 13h-6v6h-2v-6H5v-2h6V5h2v6h6v2z" size={20} />
          </div>
          <WindowControls color="#8a8f94" />
        </div>
        <Toolbar
          padding="pl-[7px] pr-[7px]"
          lead={<Mat d={ICONS.lock} size={16} />}
          avatarId="avatar-left"
          address={
            <>
              <span className="text-[#202124]">py4e.com</span>/mod/peer-grade/?PHPSESSID=2310301...
            </>
          }
        />
        <div className="flex h-[33px] shrink-0 items-center gap-4 border-b border-[#dadce0] bg-white pb-[4px] pl-[13px] pr-4">
          <CommonBookmarks />
          <span className="ml-auto text-[14px] font-bold leading-none text-[#5f6368]">»</span>
        </div>
        <LeftPage />
      </div>

      <div className="h-full w-px shrink-0 bg-[#3c4043]" />

      {/* right browser window */}
      <div className="flex h-full min-w-0 flex-1 flex-col border-t border-[#1a73b8]">
        <div className="flex h-[42px] shrink-0 items-end bg-[#dee1e6] pl-[9px]">
          <Tab icon={<GlobeIcon />} title="A Map of Information" active wide />
          <div className="mb-[9px] ml-[13px]">
            <Mat d="M19 13h-6v6h-2v-6H5v-2h6V5h2v6h6v2z" size={20} color="#3c4043" />
          </div>
          <WindowControls color="#111" />
        </div>
        <Toolbar
          padding="pl-[6px] pr-[6px]"
          lead={
            <svg width="16" height="16" viewBox="0 0 16 16" fill="none" stroke="#5f6368" strokeWidth="1.5">
              <circle cx="8" cy="8" r="6.5" />
              <path d="M8 7v4.5M8 4.5v1.5" />
            </svg>
          }
          avatarId="avatar-right"
          highlight
          address={
            <>
              <span className="text-[#202124]">127.0.0.1</span>:5500/geodata/where.html
            </>
          }
        />
        <div className="flex h-[33px] shrink-0 items-center gap-4 border-b border-[#dadce0] bg-white pb-[4px] pl-[13px] pr-4">
          <CommonBookmarks />
          <Bookmark icon={<WorldometerIcon />} label="Coronavirus Updat..." />
          <span className="ml-[14px] font-['Liberation_Serif',serif] text-[15px] text-black">W</span>
        </div>
        <div className="flex-1 bg-white pl-2 pt-2 font-['Liberation_Serif',serif] text-[16px] leading-[18px] text-black">
          <GoogleMap />
          <p className="mt-4 font-bold">About this Map</p>
          <p className="mt-4">
            This is a cool map from <a className="text-[#551a8b] underline">www.py4e.com</a>.
          </p>
        </div>
      </div>
    </div>
  );
}
